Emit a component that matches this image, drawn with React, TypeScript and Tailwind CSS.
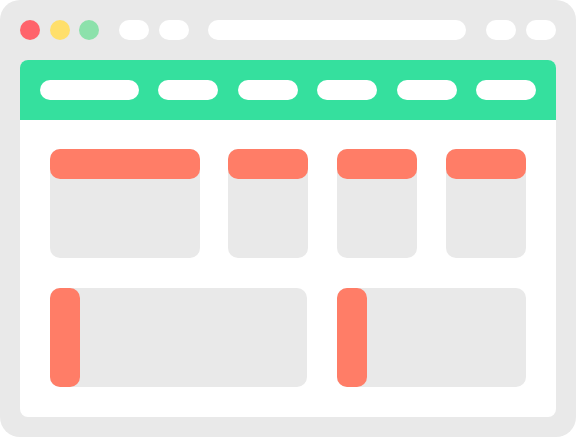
import React from 'react';

// Карточка с оранжевой шапкой сверху
const TopCard = ({ className }: { className: string }) => (
  <div className={`h-[109px] rounded-[10px] bg-[#e9e9e9] ${className}`}>
    <div className="h-[30px] rounded-[10px] bg-[#ff7d67]"></div>
  </div>
);

// Карточка с оранжевой полосой слева
const SideCard = ({ width }: { width: string }) => (
  <div className={`${width} h-[99px] rounded-[10px] bg-[#e9e9e9] flex`}>
    <div className="w-[30px] h-full rounded-[10px] bg-[#ff7d67]"></div>
  </div>
);

const Pill = ({ className }: { className: string }) => (
  <div className={`h-[20px] rounded-full bg-white ${className}`}></div>
);

export default function App() {
  return (
    <div className="w-[576px] h-[437px] bg-white">
      <div className="w-[576px] h-[437px] rounded-[20px] bg-[#e9e9e9] p-[20px] flex flex-col gap-[20px]">
        {/* верхняя панель браузера */}
        <div className="flex items-center h-[20px]">
          <div className="w-[20px] h-[20px] rounded-full bg-[#ff636b]"></div>
          <div className="w-[20px] h-[20px] rounded-full bg-[#ffdf6b] ml-[10px]"></div>
          <div className="w-[20px] h-[20px] rounded-full bg-[#8ce1ab] ml-[9px]"></div>
          <Pill className="w-[30px] ml-[20px]" />
          <Pill className="w-[30px] ml-[10px]" />
          <Pill className="flex-1 ml-[19px]" />
          <Pill className="w-[30px] ml-[20px]" />
          <Pill className="w-[30px] ml-[10px]" />
        </div>

        {/* окно */}
        <div className="flex-1 rounded-[8px] overflow-hidden bg-white flex flex-col">
          <div className="h-[60px] bg-[#35e09e] flex items-center justify-between px-[20px]">
            <Pill className="w-[99px]" />
            <Pill className="w-[60px]" />
            <Pill className="w-[60px]" />
            <Pill className="w-[60px]" />
            <Pill className="w-[60px]" />
            <Pill className="w-[60px]" />
          </div>
          <div className="flex flex-col gap-[30px] pt-[29px] px-[30px]">
            <div className="flex">
              <TopCard className="w-[150px]" />
              <TopCard className="w-[80px] ml-[28px]" />
              <TopCard className="w-[80px] ml-[29px]" />
              <TopCard className="w-[80px] ml-[29px]" />
            </div>
            <div className="flex justify-between">
              <SideCard width="w-[257px]" />
              <SideCard width="w-[189px]" />
            </div>
          </div>
        </div>
      </div>
    </div>
  );
}
